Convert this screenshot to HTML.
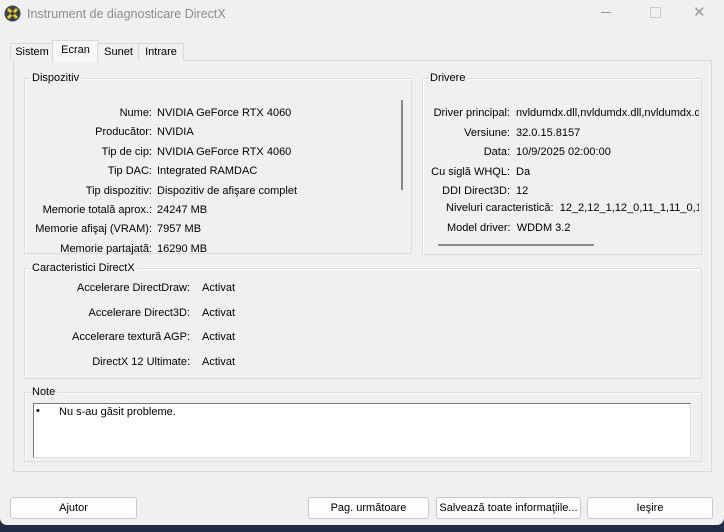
<!DOCTYPE html>
<html><head><meta charset="utf-8"><style>
body{margin:0;width:724px;height:532px;background:#1f2a44;overflow:hidden;font-family:"Liberation Sans",Tahoma,sans-serif;font-size:11px;color:#000}
#win{position:absolute;left:0;top:0;width:724px;height:525px;background:#f0f0f0;border-radius:0 0 7px 7px}
.a{position:absolute;white-space:nowrap}
.r{position:absolute;text-align:right;white-space:nowrap}
.gb{position:absolute;border:1px solid #dcdcdc;box-shadow:inset 1px 1px 0 #fff}
.gl{position:absolute;background:#f0f0f0;padding:0 2px;top:-7px;left:5px}
.btn{position:absolute;top:497px;height:20px;border:1px solid #c8c8c8;border-radius:3px;background:#fdfdfd;text-align:center;line-height:20px}
.tab{position:absolute;top:43px;height:17px;line-height:17px;text-align:center;border:1px solid #d9d9d9;border-bottom:none;background:#f0f0f0}
</style></head><body>
<div id="win">
<svg class="a" style="left:4px;top:5px" width="17" height="17" viewBox="0 0 17 17"><circle cx="8.5" cy="8.5" r="8" fill="#3a3f5a"/><path d="M4 4 L13 13 M13 4 L4 13" stroke="#f0d000" stroke-width="3"/><circle cx="8.5" cy="8.5" r="2" fill="#3a3f5a"/></svg>
<div class="a" style="left:27px;top:7px;font-size:12.5px;color:#8c8c8c">Instrument de diagnosticare DirectX</div>
<div class="a" style="left:601px;top:12px;width:10px;height:1px;background:#999"></div>
<div class="a" style="left:650px;top:7px;width:9px;height:9px;border:1px solid #ccc"></div>
<div class="a" style="left:693px;top:3px;font-size:15px;color:#999">✕</div>

<div class="a" style="left:13px;top:60px;width:697px;height:410px;border:1px solid #d9d9d9;background:#f0f0f0"></div>
<div class="tab" style="left:10px;width:42px">Sistem</div>
<div class="tab" style="left:52px;top:40px;height:21px;width:45px;background:#f8f8f8;line-height:19px">Ecran</div>
<div class="tab" style="left:97px;width:41px">Sunet</div>
<div class="tab" style="left:138px;width:44px">Intrare</div>

<div class="gb" style="left:24px;top:78px;width:386px;height:174px"><span class="gl">Dispozitiv</span></div>
<div class="a" style="left:401px;top:100px;width:2px;height:90px;background:#888"></div>
<div class="r" style="left:30px;width:122px;top:104px;line-height:19.4px">Nume:<br>Producător:<br>Tip de cip:<br>Tip DAC:<br>Tip dispozitiv:<br>Memorie totală aprox.:<br>Memorie afişaj (VRAM):<br>Memorie partajată:</div>
<div class="a" style="left:157px;top:104px;line-height:19.4px">NVIDIA GeForce RTX 4060<br>NVIDIA<br>NVIDIA GeForce RTX 4060<br>Integrated RAMDAC<br>Dispozitiv de afişare complet<br>24247 MB<br>7957 MB<br>16290 MB</div>

<div class="gb" style="left:422px;top:78px;width:278px;height:175px"><span class="gl">Drivere</span></div>
<div class="r" style="left:420px;width:90px;top:104px;line-height:19.5px">Driver principal:<br>Versiune:<br>Data:<br>Cu siglă WHQL:<br>DDI Direct3D:</div>
<div class="a" style="left:516px;top:104px;line-height:19.5px;width:183px;overflow:hidden">nvldumdx.dll,nvldumdx.dll,nvldumdx.dll<br>32.0.15.8157<br>10/9/2025 02:00:00<br>Da<br>12</div>
<div class="a" style="left:446px;top:202px;width:253px;overflow:hidden">Niveluri caracteristică:&nbsp; 12_2,12_1,12_0,11_1,11_0,10_1</div>
<div class="a" style="left:447px;top:222px">Model driver:&nbsp; WDDM 3.2</div>
<div class="a" style="left:438px;top:244px;width:156px;height:2px;background:#888"></div>

<div class="gb" style="left:24px;top:268px;width:676px;height:109px"><span class="gl">Caracteristici DirectX</span></div>
<div class="r" style="left:40px;width:150px;top:276px;line-height:24.7px">Accelerare DirectDraw:<br>Accelerare Direct3D:<br>Accelerare textură AGP:<br>DirectX 12 Ultimate:</div>
<div class="a" style="left:202px;top:276px;line-height:24.7px">Activat<br>Activat<br>Activat<br>Activat</div>

<div class="gb" style="left:24px;top:392px;width:676px;height:68px"><span class="gl">Note</span></div>
<div class="a" style="left:33px;top:403px;width:656px;height:53px;background:#fff;border-top:1px solid #777;border-left:1px solid #777;border-right:1px solid #e0e0e0;border-bottom:1px solid #e0e0e0"></div>
<div class="a" style="left:36px;top:405px">•</div>
<div class="a" style="left:59px;top:406px">Nu s-au găsit probleme.</div>

<div class="btn" style="left:10px;width:125px">Ajutor</div>
<div class="btn" style="left:308px;width:119px">Pag. următoare</div>
<div class="btn" style="left:436px;width:143px">Salvează toate informaţiile...</div>
<div class="btn" style="left:587px;width:124px">Ieşire</div>
</div>
</body></html>
